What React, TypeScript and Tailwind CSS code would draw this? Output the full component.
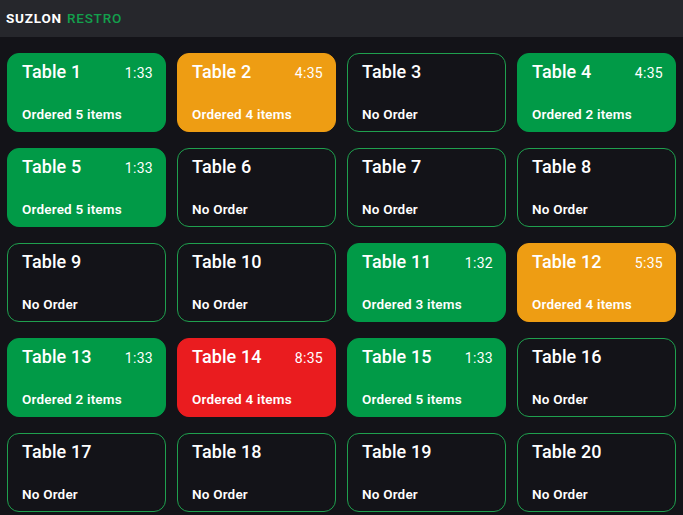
import React from 'react'

type Status = 'free' | 'ok' | 'warn' | 'late'

type Table = {
  id: number
  status: Status
  time?: string
  items?: number
}

const TABLES: Table[] = [
  { id: 1, status: 'ok', time: '1:33', items: 5 },
  { id: 2, status: 'warn', time: '4:35', items: 4 },
  { id: 3, status: 'free' },
  { id: 4, status: 'ok', time: '4:35', items: 2 },
  { id: 5, status: 'ok', time: '1:33', items: 5 },
  { id: 6, status: 'free' },
  { id: 7, status: 'free' },
  { id: 8, status: 'free' },
  { id: 9, status: 'free' },
  { id: 10, status: 'free' },
  { id: 11, status: 'ok', time: '1:32', items: 3 },
  { id: 12, status: 'warn', time: '5:35', items: 4 },
  { id: 13, status: 'ok', time: '1:33', items: 2 },
  { id: 14, status: 'late', time: '8:35', items: 4 },
  { id: 15, status: 'ok', time: '1:33', items: 5 },
  { id: 16, status: 'free' },
  { id: 17, status: 'free' },
  { id: 18, status: 'free' },
  { id: 19, status: 'free' },
  { id: 20, status: 'free' },
]

const CARD: Record<Status, string> = {
  free: 'bg-[#131318] border-[#1fa04e]',
  ok: 'bg-[#019a47] border-[#019a47]',
  warn: 'bg-[#ee9d13] border-[#ee9d13]',
  late: 'bg-[#ea1c1f] border-[#ea1c1f]',
}

function TableCard({ table }: { table: Table }) {
  return (
    <div
      className={`h-[79px] rounded-xl border-[1.5px] flex flex-col justify-between pl-[14px] pr-[12px] pt-[4px] pb-[7px] text-white ${CARD[table.status]}`}
    >
      <div className="flex items-baseline justify-between">
        <span className="text-[18px] font-medium tracking-[0.1px]">Table {table.id}</span>
        {table.time && <span className="text-[14px] tracking-[0.3px]">{table.time}</span>}
      </div>
      <span className="text-[13.5px] font-semibold tracking-[0.2px]">
        {table.items ? `Ordered ${table.items} items` : 'No Order'}
      </span>
    </div>
  )
}

export default function App() {
  return (
    <div
      className="min-h-[515px] bg-[#131318]"
      style={{ fontFamily: 'Roboto, "Open Sans", sans-serif' }}
    >
      <header className="h-[37px] bg-[#26272c] flex items-center px-[6px]">
        <span className="text-[13.5px] font-bold tracking-[0.8px] text-white">SUZLON</span>
        <span className="ml-[5px] text-[13.5px] font-medium tracking-[0.8px] text-[#13a04c]">RESTRO</span>
      </header>
      <main className="grid grid-cols-4 gap-x-[11px] gap-y-[16px] px-[7px] pt-[16px] pb-[4px]">
        {TABLES.map((t) => (
          <TableCard key={t.id} table={t} />
        ))}
      </main>
    </div>
  )
}
